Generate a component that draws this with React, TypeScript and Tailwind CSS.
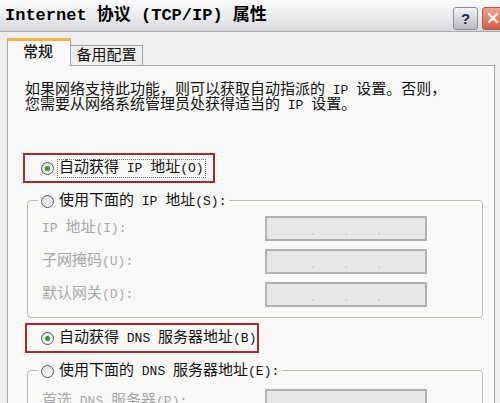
import React from "react";

const MONO = "font-['Liberation_Mono','Noto_Sans_CJK_SC',monospace]";

// half-width (ASCII) runs are set a bit smaller so they take half a CJK cell
function T({ text }: { text: string }) {
  const parts = text.match(/[\x20-\x7e]+|[^\x20-\x7e]+/g) || [];
  return (
    <>
      {parts.map((p, i) =>
        /^[\x20-\x7e]+$/.test(p) ? (
          <span key={i} className="whitespace-pre text-[13px]">
            {p}
          </span>
        ) : (
          <span key={i}>{p}</span>
        )
      )}
    </>
  );
}

function Radio({ checked }: { checked?: boolean }) {
  return (
    <span className="flex h-[13px] w-[13px] shrink-0 items-center justify-center rounded-full border border-[#45566e] bg-gradient-to-br from-[#dcdcd8] to-[#ffffff]">
      {checked && <span className="h-[5px] w-[5px] rounded-full bg-[#3f8f3f]" />}
    </span>
  );
}

function IpBox() {
  return (
    <div className="flex h-[25px] w-[162px] items-end justify-around border-2 border-[#b0b2b2] bg-[#e6e8e8] px-[30px] pb-[4px]">
      <span className="h-[2px] w-[2px] bg-[#d2d4d4]" />
      <span className="h-[2px] w-[2px] bg-[#d2d4d4]" />
      <span className="h-[2px] w-[2px] bg-[#d2d4d4]" />
    </div>
  );
}

function Field({ label }: { label: string }) {
  return (
    <div className="flex items-center pl-[14px]">
      <span className="w-[223px] whitespace-nowrap text-[#a8a8a8]">
        <T text={label} />
      </span>
      <IpBox />
    </div>
  );
}

export default function App() {
  return (
    <div className={`relative h-[403px] w-[500px] overflow-hidden bg-[#eeeeee] text-[15px] leading-[15px] text-[#111] ${MONO}`}>
      {/* Title bar */}
      <div className="flex h-[32px] items-center justify-between border-b border-[#a9a9b1] bg-gradient-to-b from-[#fbfbfc] via-[#eeeef1] to-[#d6d6dc]">
        <span className="pl-[5px] text-[17px] font-bold text-black">
          Internet 协议 (TCP/IP) 属性
        </span>
        <div className="mr-[-4px] mt-[5px] flex items-center gap-[4px]">
          <div className="flex h-[23px] w-[25px] items-center justify-center rounded-[3px] border border-[#8a8f9e] bg-gradient-to-b from-[#f4f5f8] to-[#b6bac6] font-['Liberation_Sans',sans-serif] text-[15px] font-bold text-[#1c2a55]">
            ?
          </div>
          <div className="flex h-[23px] w-[22px] items-center justify-center rounded-[3px] border border-[#b9534a] bg-gradient-to-b from-[#f0a595] to-[#d25a45]">
            <svg width="12" height="12" viewBox="0 0 12 12">
              <path d="M2 2L10 10M10 2L2 10" stroke="#fff" strokeWidth="2.2" strokeLinecap="round" />
            </svg>
          </div>
        </div>
      </div>

      {/* Tabs */}
      <div className="flex items-end pl-[7px] pt-[6px]">
        <div className="relative z-10 mb-[-1px] flex h-[28px] w-[64px] items-center justify-center border-x border-[#a0a8aa] border-t-[3px] border-t-[#f4b347] bg-[#f9f9f7] pr-[2px] font-medium">
          常规
        </div>
        <div className="flex h-[20px] w-[72px] items-center justify-center border-r border-t border-[#a0a8aa] bg-[#eeeeec] pt-[1px]">
          备用配置
        </div>
      </div>

      {/* Tab panel */}
      <div className="ml-[7px] h-[360px] w-[488px] border border-[#a0a8aa] bg-[#f9f9f7]">
        <p className="whitespace-nowrap pl-[17px] pt-[17px]">
          <T text="如果网络支持此功能，则可以获取自动指派的 IP 设置。否则，" />
          <br />
          <T text="您需要从网络系统管理员处获得适当的 IP 设置。" />
        </p>

        <div className="ml-[15px] mt-[40px] flex h-[30px] w-[192px] items-center whitespace-nowrap border-2 border-[#a8282c] pl-[16px]">
          <Radio checked />
          <span className="ml-[3px] border border-dotted border-[#777] px-[1px] py-[1px]">
            <T text="自动获得 IP 地址(O)" />
          </span>
        </div>

        <div className="ml-[19px] mt-[17px] w-[456px] rounded-[4px] border border-[#bdbdb5] pb-[10px]">
          <div className="-mt-[10px] ml-[10px] flex h-[20px] w-fit items-center whitespace-nowrap bg-[#f9f9f7] px-[3px]">
            <Radio />
            <span className="ml-[5px]">
              <T text="使用下面的 IP 地址(S):" />
            </span>
          </div>
          <div className="mt-[5px] flex flex-col gap-[8px]">
            <Field label="IP 地址(I):" />
            <Field label="子网掩码(U):" />
            <Field label="默认网关(D):" />
          </div>
        </div>

        <div className="ml-[17px] mt-[5px] flex h-[30px] w-[234px] items-center whitespace-nowrap border-2 border-[#a8282c] pl-[14px]">
          <Radio checked />
          <span className="ml-[5px]">
            <T text="自动获得 DNS 服务器地址(B)" />
          </span>
        </div>

        <div className="ml-[19px] mt-[17px] w-[456px] rounded-[4px] border border-[#bdbdb5] pb-[10px]">
          <div className="-mt-[10px] ml-[10px] flex h-[20px] w-fit items-center whitespace-nowrap bg-[#f9f9f7] px-[3px]">
            <Radio />
            <span className="ml-[5px]">
              <T text="使用下面的 DNS 服务器地址(E):" />
            </span>
          </div>
          <div className="mt-[8px] flex flex-col gap-[8px]">
            <Field label="首选 DNS 服务器(P):" />
            <Field label="备用 DNS 服务器(A):" />
          </div>
        </div>
      </div>
    </div>
  );
}
